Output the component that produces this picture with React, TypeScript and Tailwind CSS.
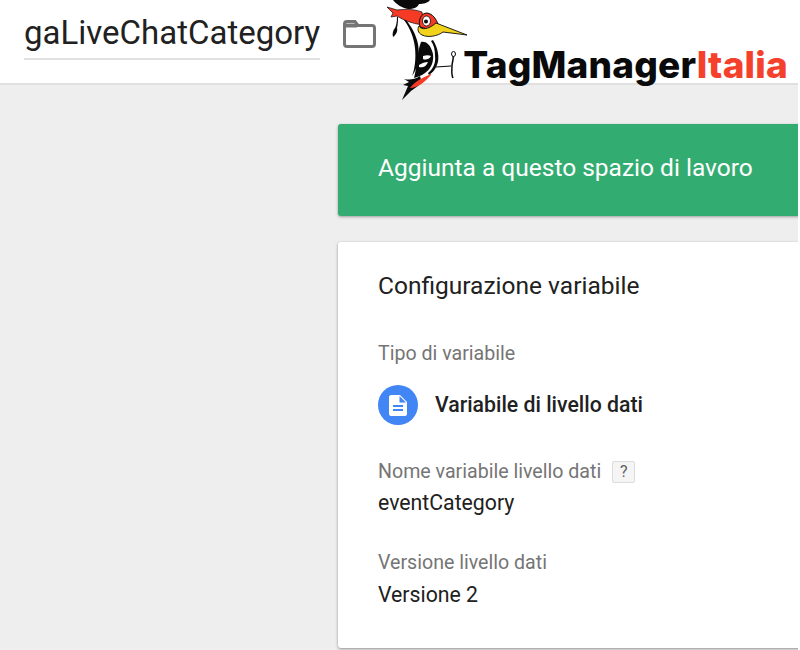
import React from 'react';

const Woodpecker = () => (
  <svg width="90" height="104" viewBox="380 0 90 104" className="absolute left-[380px] top-0">
    {/* hat */}
    <path d="M393 0 L430 0 C428 3 423 4 419 4 C418 7 414 9 408 9 C402 8 396 4 393 0Z" fill="#0a0a0a" />
    {/* bandana */}
    <path d="M387 7 L397 10 C405 9 414 9 422 12 L424 25 C413 24 403 20 397 16 L391 17 L393 13Z" fill="#f53a26" stroke="#0a0a0a" strokeWidth="0.7" />
    {/* feather */}
    <path d="M397 17 C397 22 396 26 395 28 C393 30 392 34 393 37 C396 35 398 31 397 28 C398 24 398 20 398 17Z" fill="#0a0a0a" />
    {/* head */}
    <path d="M420 27 C418 20 421 13 427 13 C433 14 436 19 438 24 L428 29Z" fill="#f53a26" stroke="#0a0a0a" strokeWidth="1" />
    <ellipse cx="426.5" cy="21" rx="4" ry="5" fill="#fff" stroke="#0a0a0a" strokeWidth="0.8" />
    <circle cx="426" cy="21.5" r="2" fill="#0a0a0a" />
    {/* beak */}
    <path d="M436 23 L467 35 L443 32 C438 36 428 38 422 35 C418 33 417 29 419 26 C421 30 428 30 436 23Z" fill="#f2d21b" stroke="#0a0a0a" strokeWidth="0.9" />
    {/* back line */}
    <path d="M404 20 C410 28 414 38 415 48 C416 58 415 68 412 76 C418 68 420 56 418 44 C416 34 411 26 406 20Z" fill="#0a0a0a" />
    {/* wing and belly */}
    <path d="M421 42 C427 41 431 46 433 54 C434 62 431 69 425 73 C421 76 417 77 414 78 C417 68 417 52 421 42Z" fill="#0a0a0a" />
    <path d="M433 40 C438 48 440 58 437 65 C435 70 432 73 429 75 L428 73 C433 69 436 63 435 56 C435 50 434 45 431 41Z" fill="#0a0a0a" />
    <path d="M423 56 C426 55 429 55 431 56 C429 60 425 60 423 59Z M419 65 C422 63 425 62 428 62 C426 67 422 68 419 67Z" fill="#fff" />
    {/* tail */}
    <path d="M420 76 C414 80 409 80 404 79 L409 82 L403 85 L408 86 L402 100 L411 91 L422 83Z" fill="#0a0a0a" />
    <path d="M431 74 C424 77 415 81 410 88 C417 88 425 82 431 75Z" fill="#f53a26" />
    {/* perch */}
    <path d="M436 67 L451 66" stroke="#0a0a0a" strokeWidth="1.2" />
    <path d="M453 55 C454 59 452 62 452 66 C452 70 451 74 453 78" stroke="#0a0a0a" strokeWidth="1.5" fill="none" />
    <ellipse cx="453.5" cy="54" rx="2" ry="2.5" fill="#fff" stroke="#0a0a0a" />
  </svg>
);

const FolderIcon = () => (
  <svg width="34" height="28" viewBox="0 0 34 28" fill="none" stroke="#757575" strokeWidth="3">
    <path d="M2.5 4 C2.5 2.5 3.5 1.5 5 1.5 H13 L16 5.5 H30 C31.5 5.5 32.5 6.5 32.5 8 V24 C32.5 25.5 31.5 26.5 30 26.5 H5 C3.5 26.5 2.5 25.5 2.5 24Z" />
    <path d="M2.5 5.5 H15" strokeWidth="4" />
  </svg>
);

const DocIcon = () => (
  <svg width="18" height="21" viewBox="0 0 18 21">
    <path d="M2 0 H11 L18 7 V19 C18 20 17 21 16 21 H2 C1 21 0 20 0 19 V2 C0 1 1 0 2 0Z" fill="#fff" />
    <path d="M10.5 1 V7.5 H17" fill="#4285f4" />
    <path d="M4 11 H14 M4 15 H14" stroke="#4285f4" strokeWidth="1.8" />
  </svg>
);

export default function App() {
  return (
    <div className="relative h-[650px] w-[800px] overflow-hidden bg-white font-['Roboto',sans-serif]">
      <div className="h-[650px] w-[798px] overflow-hidden bg-[#eeeeee]">
        {/* Header */}
        <header className="flex h-[85px] items-start border-b-2 border-[#e0e0e0] bg-white pl-6 pt-[11px]">
          <div className="border-b-2 border-[#e0e0e0] pb-[3px] text-[33px] leading-[44px] text-[#212121]">gaLiveChatCategory</div>
          <div className="ml-[22px] mt-[9px]"><FolderIcon /></div>
          <div className="ml-[87px] mt-[32px] whitespace-nowrap font-['Inter',sans-serif] text-[37px] font-extrabold leading-[44px] tracking-[0.2px] text-[#0a0a0a]">
            TagManager<span className="text-[#f5402c]">Italia</span>
          </div>
        </header>
        <Woodpecker />

        {/* Main column */}
        <main className="ml-[338px] w-[470px] pt-[39px]">
          <div className="flex h-[92px] items-center rounded-[3px] bg-[#33ac71] pb-1 pl-10 text-[24.5px] text-white shadow-[0_1px_3px_rgba(0,0,0,0.35)]">
            Aggiunta a questo spazio di lavoro
          </div>

          <section className="mt-[26px] h-[406px] rounded-[3px] bg-white pl-10 pt-7 shadow-[0_1px_3px_rgba(0,0,0,0.4)]">
            <h2 className="text-[24.5px] leading-8 text-[#212121]">Configurazione variabile</h2>

            <div className="mt-[40px] text-[19.6px] leading-6 text-[#757575]">Tipo di variabile</div>
            <div className="mt-[19px] flex items-center">
              <div className="flex h-10 w-10 items-center justify-center rounded-full bg-[#4285f4]"><DocIcon /></div>
              <div className="ml-[17px] text-[21.25px] font-medium text-[#212121]">Variabile di livello dati</div>
            </div>

            <div className="mt-[35px] flex items-center text-[19.6px] leading-6 text-[#757575]">
              Nome variabile livello dati
              <span className="ml-[11px] flex h-[22px] w-[23px] items-center justify-center rounded-[2px] border border-[#dcdcdc] bg-[#f5f5f5] text-base text-[#616161]">?</span>
            </div>
            <div className="mt-[7px] text-[21.25px] leading-6 text-[#212121]">eventCategory</div>

            <div className="mt-[36px] text-[19.6px] leading-6 text-[#757575]">Versione livello dati</div>
            <div className="mt-[8px] text-[21.25px] leading-6 text-[#212121]">Versione 2</div>
          </section>
        </main>
      </div>
    </div>
  );
}
